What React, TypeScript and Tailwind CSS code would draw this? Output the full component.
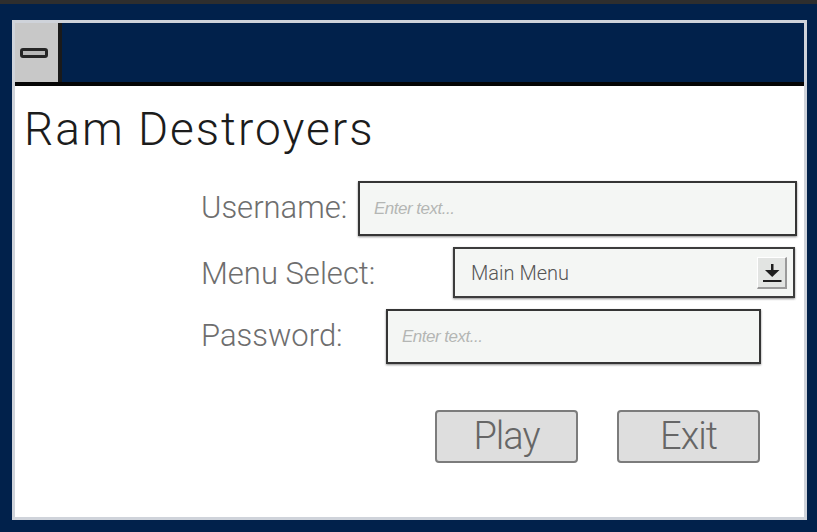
import React from "react";

const font = "font-['Liberation_Sans',Arial,sans-serif]";
const thin = "font-['Roboto','Liberation_Sans',sans-serif] font-light";

function TextBox({ width }: { width: string }) {
    return (
        <div
            className={`${width} h-[55px] flex items-center px-[14px] bg-[#f4f6f4] border-2 border-[#353535] shadow-[0_1px_2px_rgba(0,0,0,0.45)]`}
        >
            <span className={`${font} italic text-[17px] tracking-[-0.5px] text-[#b4b6b4]`}>
                Enter text...
            </span>
        </div>
    );
}

function DropArrow() {
    return (
        <svg width="24" height="24" viewBox="0 0 24 24">
            <rect x="11" y="4" width="2.5" height="7" fill="#1e1e1e" />
            <polygon points="5,10 19.5,10 12.2,17" fill="#1e1e1e" />
            <rect x="3" y="20" width="18.5" height="2" fill="#1e1e1e" />
        </svg>
    );
}

export default function App() {
    return (
        <div className="w-[817px] h-[532px] bg-[#01214b] border-t-4 border-[#2e2e2e] pt-[16px] pl-[12px] pr-[10px] pb-[12px]">
            {/* Window */}
            <div className="h-[500px] flex flex-col bg-white border-[3px] border-[#cfd3da]">
                {/* Title bar */}
                <div className="h-[63px] flex bg-[#01214b] border-b-4 border-[#050505]">
                    <div className="w-[47px] flex items-center bg-[#c8c8c8] border-r-4 border-[#1a1a1a]">
                        <div className="ml-[5px] w-[28px] h-[10px] rounded-[3px] bg-[#b8b8b8] border-[3px] border-[#262626]" />
                    </div>
                </div>

                {/* Heading */}
                <h1 className={`${thin} mt-[20px] pl-[9px] text-[46px] leading-[46px] tracking-[2px] text-[#1c1c1c]`}>
                    Ram Destroyers
                </h1>

                {/* Form */}
                <div className="mt-[29px] pl-[186px] flex flex-col gap-[11px]">
                    <div className="flex items-center">
                        <label className={`${thin} w-[157px] text-[31px] text-[#6e6e6e]`}>
                            Username:
                        </label>
                        <TextBox width="w-[439px]" />
                    </div>

                    <div className="flex items-center">
                        <label className={`${thin} w-[252px] pt-[4px] text-[31px] text-[#6e6e6e]`}>
                            Menu Select:
                        </label>
                        <div className="w-[342px] h-[51px] flex items-center justify-between pl-[16px] pr-[6px] bg-[#f4f6f4] border-2 border-[#3c3c3c] shadow-[0_1px_2px_rgba(0,0,0,0.45)]">
                            <span className={`${thin} text-[20px] text-[#555555]`}>
                                Main Menu
                            </span>
                            <div className="w-[30px] h-[32px] flex items-center justify-center bg-[#e2e4e2] border-r-2 border-b-2 border-[#9a9a9a] border-l border-t border-l-white border-t-white">
                                <DropArrow />
                            </div>
                        </div>
                    </div>

                    <div className="flex items-center">
                        <label className={`${thin} w-[185px] text-[31px] text-[#6e6e6e]`}>
                            Password:
                        </label>
                        <TextBox width="w-[375px]" />
                    </div>
                </div>

                {/* Actions */}
                <div className="mt-[46px] pl-[420px] flex gap-[39px]">
                    {["Play", "Exit"].map((label) => (
                        <button
                            key={label}
                            className={`${thin} w-[143px] h-[53px] flex items-center justify-center rounded-[4px] bg-[#dedede] border-2 border-[#7c7c7c] text-[38px] tracking-[-1px] text-[#666666]`}
                        >
                            {label}
                        </button>
                    ))}
                </div>
            </div>
        </div>
    );
}
